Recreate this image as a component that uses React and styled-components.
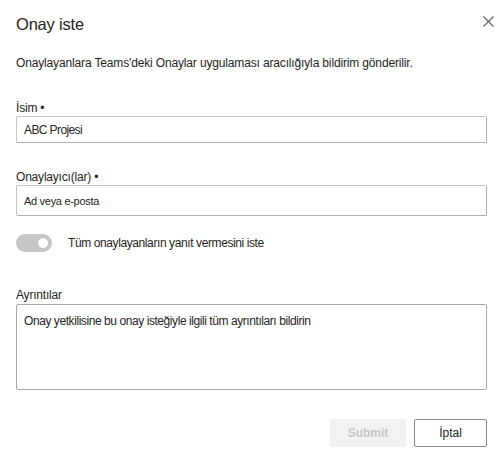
import styled, { createGlobalStyle } from "styled-components"

const GlobalStyle = createGlobalStyle`
    html, body {
        margin: 0;
        padding: 0;
        background: #ffffff;
    }
    body {
        font-family: "Liberation Sans", Arial, sans-serif;
        color: #252423;
    }
`

export default function App() {
    return (
        <Dialog>
            <GlobalStyle />
            <Header>
                <Title>Onay iste</Title>
                <CloseButton aria-label="Kapat">
                    <svg width="11" height="11" viewBox="0 0 11 11">
                        <path d="M0.5 0.5 L10.5 10.5 M10.5 0.5 L0.5 10.5" stroke="#605e5c" strokeWidth="1.1" fill="none" />
                    </svg>
                </CloseButton>
            </Header>
            <Description>Onaylayanlara Teams'deki Onaylar uygulaması aracılığıyla bildirim gönderilir.</Description>

            <Label $top={30}>İsim •</Label>
            <Input $height={27} defaultValue="ABC Projesi" />

            <Label $top={27}>Onaylayıcı(lar) •</Label>
            <Input $height={31} $small placeholder="Ad veya e-posta" />

            <ToggleRow>
                <Toggle>
                    <Knob />
                </Toggle>
                <ToggleText>Tüm onaylayanların yanıt vermesini iste</ToggleText>
            </ToggleRow>

            <Label $top={36} $bottom={2}>Ayrıntılar</Label>
            <TextArea placeholder="Onay yetkilisine bu onay isteğiyle ilgili tüm ayrıntıları bildirin" />

            <Footer>
                <SubmitButton disabled>Submit</SubmitButton>
                <CancelButton>İptal</CancelButton>
            </Footer>
        </Dialog>
    );
}

const Dialog = styled.div`
    width: 500px;
    box-sizing: border-box;
    padding: 12px 13px 0 16px;
    display: flex;
    flex-direction: column;
`

const Header = styled.div`
    display: flex;
    justify-content: space-between;
    align-items: center;
    height: 24px;
    margin-right: -7px;
`

const Title = styled.h1`
    margin: 0;
    font-size: 16.5px;
    font-weight: 400;
    line-height: 24px;
    letter-spacing: -0.2px;
    color: #252423;
`

const CloseButton = styled.button`
    border: none;
    background: none;
    padding: 0;
    width: 11px;
    height: 11px;
    display: flex;
    margin-top: -6px;
`

const Description = styled.p`
    margin: 19px 0 0 0;
    font-size: 12px;
    line-height: 16px;
    letter-spacing: -0.15px;
    color: #252423;
`

const Label = styled.label`
    display: block;
    margin-top: ${p => p.$top}px;
    margin-bottom: ${p => p.$bottom ?? 1}px;
    font-size: 12px;
    line-height: 14px;
    letter-spacing: -0.2px;
    color: #252423;
`

const Input = styled.input`
    box-sizing: border-box;
    width: 100%;
    height: ${p => p.$height}px;
    border: 1px solid #c4c4c4;
    border-right-color: #b0b0b0;
    border-bottom-color: #b0b0b0;
    border-radius: 2px;
    padding: 0 7px;
    font-family: "Liberation Sans", Arial, sans-serif;
    font-size: ${p => p.$small ? 11 : 12}px;
    letter-spacing: ${p => p.$small ? -0.3 : -0.6}px;
    color: #252423;
    outline: none;

    &::placeholder {
        color: #252423;
        opacity: 1;
    }
`

const ToggleRow = styled.div`
    display: flex;
    align-items: center;
    gap: 16px;
    margin-top: 18px;
    height: 18px;
`

const Toggle = styled.div`
    width: 36px;
    height: 18px;
    border-radius: 9px;
    background: #c8c6c4;
    display: flex;
    align-items: center;
    justify-content: flex-end;
    padding-right: 4px;
    box-sizing: border-box;
`

const Knob = styled.div`
    width: 10px;
    height: 10px;
    border-radius: 50%;
    background: #ffffff;
`

const ToggleText = styled.span`
    font-size: 12px;
    letter-spacing: -0.4px;
    color: #252423;
`

const TextArea = styled.textarea`
    box-sizing: border-box;
    width: 100%;
    height: 86px;
    border: 1px solid #a8a8a8;
    border-radius: 2px;
    padding: 8px 7px;
    font-family: "Liberation Sans", Arial, sans-serif;
    font-size: 12px;
    line-height: 16px;
    letter-spacing: -0.43px;
    resize: none;
    outline: none;

    &::placeholder {
        color: #252423;
        opacity: 1;
    }
`

const Footer = styled.div`
    display: flex;
    justify-content: flex-end;
    gap: 8px;
    margin-top: 29px;
`

const SubmitButton = styled.button`
    width: 76px;
    height: 28px;
    border: none;
    border-radius: 2px;
    background: #f3f2f1;
    color: #c8c6c4;
    font-family: "Liberation Sans", Arial, sans-serif;
    font-size: 12px;
    font-weight: 700;
`

const CancelButton = styled.button`
    width: 73px;
    height: 28px;
    border: 1px solid #8a8886;
    border-radius: 2px;
    background: #ffffff;
    color: #252423;
    font-family: "Liberation Sans", Arial, sans-serif;
    font-size: 12px;
`
